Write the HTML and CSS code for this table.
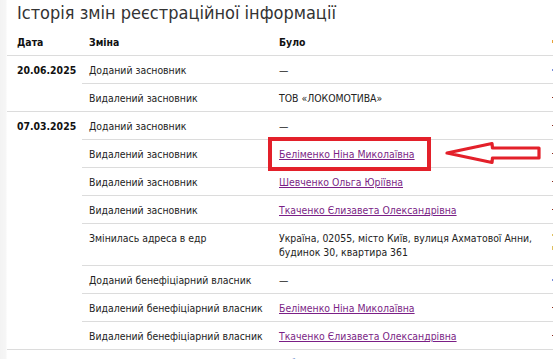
FILE: index.html
```html
<!DOCTYPE html>
<html lang="uk">
<head>
<meta charset="utf-8">
<link rel="stylesheet" href="styles.css">
</head>
<body>
<div class="page">
  <h1 class="title">Історія змін реєстраційної інформації</h1>
  <table class="history">
    <thead>
      <tr>
        <th class="c-date">Дата</th>
        <th class="c-change">Зміна</th>
        <th class="c-was">Було</th>
        <th class="c-now"><span class="tick hint"></span></th>
      </tr>
    </thead>
    <tbody>
      <tr>
        <td class="c-date" rowspan="2">20.06.2025</td>
        <td class="c-change">Доданий засновник</td>
        <td class="c-was">—</td>
        <td class="c-now"><span class="tick n-link"></span></td>
      </tr>
      <tr>
        <td class="c-change">Видалений засновник</td>
        <td class="c-was">ТОВ «ЛОКОМОТИВА»</td>
        <td class="c-now"><span class="tick n-dash"></span></td>
      </tr>
      <tr>
        <td class="c-date" rowspan="8">07.03.2025</td>
        <td class="c-change">Доданий засновник</td>
        <td class="c-was">—</td>
        <td class="c-now"><span class="tick n-dash"></span></td>
      </tr>
      <tr>
        <td class="c-change">Видалений засновник</td>
        <td class="c-was"><a class="link" href="#">Беліменко Ніна Миколаївна</a></td>
        <td class="c-now"><span class="tick n-dash"></span></td>
      </tr>
      <tr>
        <td class="c-change">Видалений засновник</td>
        <td class="c-was"><a class="link" href="#">Шевченко Ольга Юріївна</a></td>
        <td class="c-now"><span class="tick n-dash"></span></td>
      </tr>
      <tr>
        <td class="c-change">Видалений засновник</td>
        <td class="c-was"><a class="link" href="#">Ткаченко Єлизавета Олександрівна</a></td>
        <td class="c-now"><span class="tick n-dash"></span></td>
      </tr>
      <tr>
        <td class="c-change">Змінилась адреса в едр</td>
        <td class="c-was">Україна, 02055, місто Київ, вулиця Ахматової Анни, будинок 30, квартира 361</td>
        <td class="c-now"><span class="tick n-yellow"></span><span class="tick n-yellow second"></span></td>
      </tr>
      <tr>
        <td class="c-change">Доданий бенефіціарний власник</td>
        <td class="c-was">—</td>
        <td class="c-now"><span class="tick n-link"></span></td>
      </tr>
      <tr>
        <td class="c-change">Видалений бенефіціарний власник</td>
        <td class="c-was"><a class="link" href="#">Беліменко Ніна Миколаївна</a></td>
        <td class="c-now"><span class="tick n-dash"></span></td>
      </tr>
      <tr>
        <td class="c-change">Видалений бенефіціарний власник</td>
        <td class="c-was"><a class="link" href="#">Ткаченко Єлизавета Олександрівна</a></td>
        <td class="c-now"><span class="tick n-dash"></span></td>
      </tr>
      <tr class="row-next">
        <td class="c-date">06.03.2025</td>
        <td class="c-change">Змінився керівник</td>
        <td class="c-was"><a class="link new" href="#">Рябко Марія Георгіївна</a></td>
        <td class="c-now"><span class="tick n-dash"></span></td>
      </tr>
    </tbody>
  </table>

  <div class="mark"></div>
  <svg class="arrow" width="100" height="26" viewBox="0 0 100 26">
    <path d="M2 13 L47 3.5 L47.5 8 L94 8 L94 18 L47.5 18 L47 22.5 Z" fill="#fff" stroke="#e3202a" stroke-width="3.2" stroke-linejoin="round"/>
  </svg>
</div>
</body>
</html>
```

FILE: styles.css
```css
html, body {
  margin: 0;
  padding: 0;
  background: #ffffff;
  overflow: hidden;
}

body {
  width: 553px;
  height: 359px;
  font-family: "DejaVu Sans Condensed", "DejaVu Sans", Verdana, sans-serif;
  font-stretch: condensed;
  font-size: 10.4px;
  color: #222;
}

.page {
  position: relative;
  padding-left: 7px;
  min-height: 359px;
  background: linear-gradient(to right, #f3f3f3 0, #f6f6f6 6px, #ffffff 7px);
}

.title {
  margin: 0;
  padding: 1px 0 0 10px;
  height: 29px;
  font-family: "DejaVu Sans Condensed", "DejaVu Sans", Verdana, sans-serif;
  font-stretch: condensed;
  font-weight: normal;
  font-size: 18px;
  line-height: 24px;
  color: #333;
  white-space: nowrap;
}

.history {
  border-collapse: collapse;
  table-layout: fixed;
  width: 560px;
  background: #fff;
}

.history th,
.history td {
  text-align: left;
  vertical-align: top;
  padding: 7px 7px 6px 7px;
  line-height: 14px;
  border-bottom: 1px solid #dcdcdc;
}

.history th {
  font-weight: bold;
  color: #111;
  padding-top: 5px;
  padding-bottom: 6px;
}

.c-date {
  width: 58px;
  padding-left: 10px !important;
  font-weight: bold;
  color: #111;
  white-space: nowrap;
}

.c-change {
  width: 176px;
  white-space: nowrap;
}

.c-was {
  width: 259px;
}

.c-now {
  width: 40px;
  white-space: nowrap;
}

.row-next td {
  padding-top: 6px;
}

.link {
  color: #7b1f86;
  text-decoration: underline;
}

.link.new {
  color: #1a4fb5;
}

.tick {
  display: block;
  width: 2px;
  height: 2px;
  margin-top: 6px;
}

.tick.second {
  margin-top: 10px;
  height: 4px;
}

.hint { background: #e8a33a; margin-top: 5px; height: 3px; }
.n-link { background: #7b8fd8; }
.n-dash { background: #8a2a1a; height: 1px; }
.n-yellow { background: #e0c060; margin-top: 3px; }

.mark {
  position: absolute;
  left: 268px;
  top: 137px;
  width: 155px;
  height: 26px;
  border: 4px solid #e3202a;
}

.arrow {
  position: absolute;
  left: 445px;
  top: 140px;
}
```
